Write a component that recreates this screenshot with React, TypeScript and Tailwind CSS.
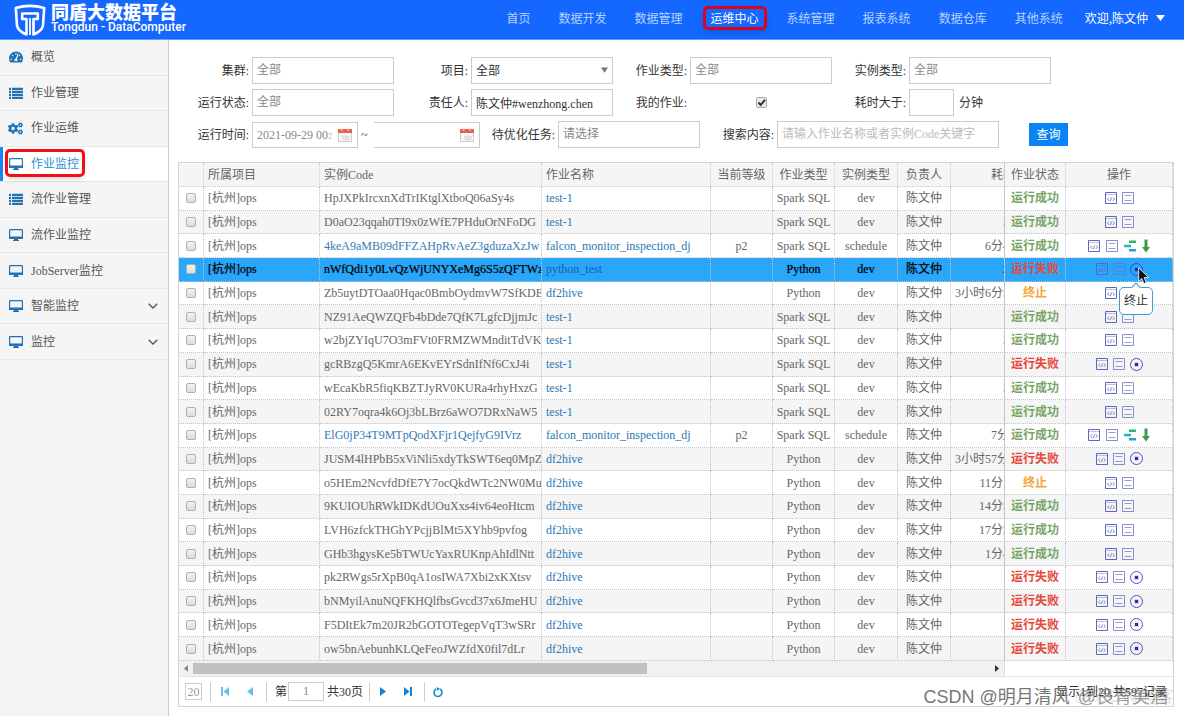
import type { ReactNode } from "react";
import { FaCogs, FaTachometerAlt } from "react-icons/fa";

const navItems = ["首页", "数据开发", "数据管理", "运维中心", "系统管理", "报表系统", "数据仓库", "其他系统"];

type MenuIcon = "dash" | "list" | "cogs" | "screen";

const menu: { label: string; icon: MenuIcon; active?: boolean; more?: boolean }[] = [
  { label: "概览", icon: "dash" },
  { label: "作业管理", icon: "list" },
  { label: "作业运维", icon: "cogs" },
  { label: "作业监控", icon: "screen", active: true },
  { label: "流作业管理", icon: "list" },
  { label: "流作业监控", icon: "screen" },
  { label: "JobServer监控", icon: "screen" },
  { label: "智能监控", icon: "screen", more: true },
  { label: "监控", icon: "screen", more: true },
];

type Status = "ok" | "fail" | "stop";

interface Job {
  code: string;
  name: string;
  type: string;
  time: string;
  status: Status;
  scheduled?: boolean;
  selected?: boolean;
}

const SQL = "Spark SQL";
const PY = "Python";

const jobs: Job[] = [
  { code: "HpJXPkIrcxnXdTrIKtglXtboQ06aSy4s", name: "test-1", type: SQL, time: "", status: "ok" },
  { code: "D0aO23qqah0TI9x0zWfE7PHduOrNFoDG", name: "test-1", type: SQL, time: "2", status: "ok" },
  { code: "4keA9aMB09dFFZAHpRvAeZ3gduzaXzJw", name: "falcon_monitor_inspection_dj", type: SQL, time: "6分4", status: "ok", scheduled: true },
  { code: "nWfQdi1y0LvQzWjUNYXeMg6S5zQFTWzB", name: "python_test", type: PY, time: "2", status: "fail", selected: true },
  { code: "Zb5uytDTOaa0Hqac0BmbOydmvW7SfKDE", name: "df2hive", type: PY, time: "3小时6分5", status: "stop" },
  { code: "NZ91AeQWZQFb4bDde7QfK7LgfcDjjmJc", name: "test-1", type: SQL, time: "", status: "ok" },
  { code: "w2bjZYIqU7O3mFVt0FRMZWMnditTdVK7", name: "test-1", type: SQL, time: "2", status: "ok" },
  { code: "gcRBzgQ5KmrA6EKvEYrSdnIfNf6CxJ4i", name: "test-1", type: SQL, time: "", status: "fail" },
  { code: "wEcaKbR5fiqKBZTJyRV0KURa4rhyHxzG", name: "test-1", type: SQL, time: "3", status: "ok" },
  { code: "02RY7oqra4k6Oj3bLBrz6aWO7DRxNaW5", name: "test-1", type: SQL, time: "", status: "ok" },
  { code: "ElG0jP34T9MTpQodXFjr1QejfyG9IVrz", name: "falcon_monitor_inspection_dj", type: SQL, time: "7分", status: "ok", scheduled: true },
  { code: "JUSM4lHPbB5xViNli5xdyTkSWT6eq0MpZ", name: "df2hive", type: PY, time: "3小时57分", status: "fail" },
  { code: "o5HEm2NcvfdDfE7Y7ocQkdWTc2NW0Mu2", name: "df2hive", type: PY, time: "11分1", status: "stop" },
  { code: "9KUIOUhRWkIDKdUOuXxs4iv64eoHtcm", name: "df2hive", type: PY, time: "14分5", status: "ok" },
  { code: "LVH6zfckTHGhYPcjjBlMt5XYhb9pvfog", name: "df2hive", type: PY, time: "17分2", status: "ok" },
  { code: "GHb3hgysKe5bTWUcYaxRUKnpAhIdlNtt", name: "df2hive", type: PY, time: "1分4", status: "ok" },
  { code: "pk2RWgs5rXpB0qA1osIWA7Xbi2xKXtsv", name: "df2hive", type: PY, time: "", status: "fail" },
  { code: "bNMyilAnuNQFKHQlfbsGvcd37x6JmeHU", name: "df2hive", type: PY, time: "", status: "fail" },
  { code: "F5DItEk7m20JR2bGOTOTegepVqT3wSRr", name: "df2hive", type: PY, time: "", status: "fail" },
  { code: "ow5bnAebunhKLQeFeoJWZfdX0fil7dLr", name: "df2hive", type: PY, time: "", status: "fail" },
];

const statusText: Record<Status, string> = { ok: "运行成功", fail: "运行失败", stop: "终止" };
const statusColor: Record<Status, string> = {
  ok: "text-[#78a566]",
  fail: "text-[#e8473a]",
  stop: "text-[#f5a638]",
};

const fieldBase = "h-[27px] border border-[#ccc] bg-white px-1 text-xs text-[#333] outline-none placeholder:text-[#888]";

function Logo() {
  return (
    <svg viewBox="0 0 32 32" className="h-8 w-8" fill="none" stroke="#fff">
      <path d="M1.800 4Q16-.2 30.200 4L29 21.500Q28 27 19.500 30.500V15h4.300V9.500H8.200V15h4.300v15.500Q4 27 3 21.500Z" strokeWidth="2.600" strokeLinejoin="round" />
      <path d="M16 14v17" strokeWidth="1.800" />
    </svg>
  );
}

function MenuGlyph({ icon }: { icon: MenuIcon }) {
  if (icon === "dash") return <FaTachometerAlt className="h-[14px] w-[14px]" />;
  if (icon === "cogs") return <FaCogs className="h-[15px] w-[15px]" />;
  if (icon === "list") {
    return (
      <svg viewBox="0 0 14 12" className="h-3 w-[14px]" fill="currentColor">
        <path d="M0 .8h2v2.200H0zM3 .8h11v2.200H3zM0 3.800h2V6H0zM3 3.800h11V6H3zM0 6.800h2V9H0zM3 6.800h11V9H3zM0 9.800h2V12H0zM3 9.800h11V12H3z" />
      </svg>
    );
  }
  return (
    <svg viewBox="0 0 14 12" className="h-3 w-[14px]">
      <rect x=".6" y=".6" width="12.800" height="8.800" rx=".6" fill="none" stroke="currentColor" strokeWidth="1.200" />
      <path d="M0 7.500h14V10H9v1h1v1H4v-1h1v-1H0z" fill="currentColor" />
    </svg>
  );
}

function CalendarIcon() {
  return (
    <svg viewBox="0 0 14 14" className="h-[14px] w-[14px] shrink-0">
      <rect x=".5" y="2.500" width="13" height="11" fill="#f8f8f8" stroke="#ccc" />
      <path d="M0 1h14v4H0z" fill="#ea6153" />
      <path d="M3 0h1.500v2.500H3zM9.500 0H11v2.500H9.500z" fill="#f6d5d1" />
      <path d="M4 8h1v4M7 8h2v4H7zM11 8v4" fill="none" stroke="#c4c4c4" strokeWidth=".8" />
    </svg>
  );
}

function CodeIcon() {
  return (
    <svg viewBox="0 0 12 12" className="h-3 w-3" fill="none" stroke="#5b66bd">
      <path d="M.5.5h11v11H.5z" />
      <path d="M.5 2.500h11" strokeOpacity=".4" />
      <path d="M4.200 5.500 2.500 7.200l1.700 1.700M7.800 5.500l1.700 1.700-1.700 1.700M6.800 5.500 5.200 9" strokeWidth=".8" />
    </svg>
  );
}

function LogIcon() {
  return (
    <svg viewBox="0 0 12 12" className="h-3 w-3" fill="none" stroke="#6a72c6">
      <path d="M.5.5h11v11H.5z" strokeOpacity=".8" />
      <path d="M2.500 3.500h7M2.500 8.500h7" strokeOpacity=".7" />
    </svg>
  );
}

function StopIcon() {
  return (
    <svg viewBox="0 0 13 13" className="h-[13px] w-[13px]">
      <circle cx="6.500" cy="6.500" r="6" fill="none" stroke="#3f3fb5" strokeWidth=".9" />
      <path d="M4.800 4.800h3.400v3.400H4.800z" fill="#2c2cb0" />
    </svg>
  );
}

function GanttIcon() {
  return (
    <svg viewBox="0 0 12 12" className="h-3 w-3">
      <path d="M5 .5h7v2.500H5z" fill="#2bb673" />
      <path d="M0 4.800h7v2.500H0z" fill="#1fb5b8" />
      <path d="M5 9h7v2.500H5z" fill="#2e9be0" />
    </svg>
  );
}

function DownIcon() {
  return (
    <svg viewBox="0 0 8 14" className="h-[14px] w-2">
      <path d="M2.500.5h3V8H8l-4 5.500L0 8h2.500z" fill="#3d9a4c" />
    </svg>
  );
}

function IconButton({ label, children }: { label: string; children: ReactNode }) {
  return (
    <button type="button" aria-label={label} className="block">
      {children}
    </button>
  );
}

function Actions({ job }: { job: Job }) {
  return (
    <div className={`flex items-center justify-center ${job.scheduled ? "gap-[6px]" : "gap-[5px]"}`}>
      <IconButton label="代码"><CodeIcon /></IconButton>
      <IconButton label="日志"><LogIcon /></IconButton>
      {job.scheduled && (
        <>
          <IconButton label="甘特图"><GanttIcon /></IconButton>
          <IconButton label="下游"><DownIcon /></IconButton>
        </>
      )}
      {job.status === "fail" && (
        <div className="relative">
          <IconButton label="停止"><StopIcon /></IconButton>
          {job.selected && (
            <>
              <div role="tooltip" className="absolute top-6 left-1/2 z-10 -translate-x-1/2 rounded-[5px] border border-[#3d9bd6] bg-white px-1 py-1 text-xs leading-[18px] whitespace-nowrap text-[#333]">
                <span className="absolute -top-1 left-1/2 h-[7px] w-[7px] -translate-x-1/2 rotate-45 border-t border-l border-[#3d9bd6] bg-white" />
                终止
              </div>
              <svg viewBox="0 0 12 18" className="absolute top-1 left-2 z-20 h-[18px] w-3">
                <path d="M.7.8v13.400l3.100-2.800 2.100 5.200 2.300-1-2.100-5h4.500z" fill="#111" stroke="#fff" strokeWidth=".8" />
              </svg>
            </>
          )}
        </div>
      )}
    </div>
  );
}

function Field({ label, id, children }: { label: string; id: string; children: ReactNode }) {
  return (
    <div className="flex w-[219px] items-center gap-[3px]">
      <label htmlFor={id} className="w-[71px] shrink-0 text-right">{label}</label>
      {children}
    </div>
  );
}

function DateField({ id, label, value }: { id: string; label: string; value: string }) {
  return (
    <div className={`flex h-[26px] w-[106px] items-center border-[#ccc] pr-[5px] pl-1 ${value ? "border" : "border border-l-0"}`}>
      <input id={id} aria-label={label} defaultValue={value} className="w-[75px] text-xs text-[#888] outline-none" />
      <span className="flex-1" />
      <CalendarIcon />
    </div>
  );
}

function Filters() {
  return (
    <form className="flex flex-col gap-[5px] text-[#333]">
      <div className="flex flex-wrap">
        <Field label="集群:" id="cluster">
          <input id="cluster" placeholder="全部" className={`${fieldBase} w-[142px]`} />
        </Field>
        <Field label="项目:" id="project">
          <div className="relative">
            <select id="project" className={`${fieldBase} w-[142px] appearance-none`}>
              <option>全部</option>
            </select>
            <svg viewBox="0 0 8 6" className="pointer-events-none absolute top-[10px] right-[5px] h-[6px] w-[7px]">
              <path d="M0 0h8L4 6z" fill="#777" />
            </svg>
          </div>
        </Field>
        <Field label="作业类型:" id="jobType">
          <input id="jobType" placeholder="全部" className={`${fieldBase} w-[142px]`} />
        </Field>
        <Field label="实例类型:" id="instType">
          <input id="instType" placeholder="全部" className={`${fieldBase} w-[142px]`} />
        </Field>
      </div>
      <div className="flex flex-wrap">
        <Field label="运行状态:" id="state">
          <input id="state" placeholder="全部" className={`${fieldBase} w-[142px]`} />
        </Field>
        <Field label="责任人:" id="owner">
          <input id="owner" defaultValue="陈文仲#wenzhong.chen" className={`${fieldBase} w-[142px]`} />
        </Field>
        <Field label="我的作业:" id="mine">
          <span className="relative flex w-[142px] justify-center">
            <input id="mine" type="checkbox" defaultChecked className="peer h-[11px] w-[11px] appearance-none rounded-[2px] border border-[#a8a8a8] bg-[#e9e9e9]" />
            <svg viewBox="0 0 11 11" className="pointer-events-none absolute hidden h-[11px] w-[11px] peer-checked:block">
              <path d="M2.500 5.500 4.700 8 9 2.800" fill="none" stroke="#333" strokeWidth="2" />
            </svg>
          </span>
        </Field>
        <Field label="耗时大于:" id="cost">
          <input id="cost" className={`${fieldBase} w-[45px]`} />
          <span className="ml-[2px]">分钟</span>
        </Field>
      </div>
      <div className="flex flex-wrap items-center">
        <label htmlFor="from" className="mr-[3px] w-[71px] text-right">运行时间:</label>
        <DateField id="from" label="开始时间" value="2021-09-29 00:00:00" />
        <span className="w-4 pl-[3px]">~</span>
        <DateField id="to" label="结束时间" value="" />
        <label htmlFor="optimize" className="mr-[3px] w-[75px] text-right">待优化任务:</label>
        <input id="optimize" placeholder="请选择" className={`${fieldBase} w-[142px]`} />
        <label htmlFor="search" className="mr-[3px] w-[74px] text-right">搜索内容:</label>
        <input id="search" placeholder="请输入作业名称或者实例Code关键字" className={`${fieldBase} w-[222px] placeholder:text-[#bbb]`} />
        <button type="submit" className="ml-[30px] h-[23px] w-[39px] bg-[#0a84f5] text-white">查询</button>
      </div>
    </form>
  );
}

const th = "h-6 border-r border-b border-dotted border-[#ccc] font-normal";
const td = "overflow-hidden border-r border-b border-dotted border-[#c4c4c4] whitespace-nowrap";

function rowStyle(job: Job) {
  if (job.selected) return "bg-[#2aa7fb] text-black [text-shadow:0_0_1px_#00000080]";
  return "text-[#666] odd:bg-white even:bg-[#f5f5f5]";
}

function JobTable() {
  return (
    <table className="h-[498px] w-full table-fixed border-separate border-spacing-0 leading-4">
      <colgroup>
        <col className="w-[25px]" />
        <col className="w-[116px]" />
        <col className="w-[222px]" />
        <col />
        <col className="w-[62px]" />
        <col className="w-[62px]" />
        <col className="w-[63px]" />
        <col className="w-[53px]" />
        <col className="w-[54px]" />
        <col className="w-[61px]" />
        <col className="w-[107px]" />
      </colgroup>
      <thead className="bg-[#f5f5f5] text-[#666]">
        <tr className="h-6">
          <th className={th} />
          <th className={`${th} pl-1 text-left`}>所属项目</th>
          <th className={`${th} pl-1 text-left`}>实例Code</th>
          <th className={`${th} pl-1 text-left`}>作业名称</th>
          <th className={th}>当前等级</th>
          <th className={th}>作业类型</th>
          <th className={th}>实例类型</th>
          <th className={th}>负责人</th>
          <th className={`${th} overflow-hidden pl-10 text-left whitespace-nowrap [border-right-style:solid]`}>耗时</th>
          <th className={th}>作业状态</th>
          <th className={th}>操作</th>
        </tr>
      </thead>
      <tbody>
        {jobs.map((job) => (
          <tr key={job.code} className={rowStyle(job)}>
            <td className={td}>
              <input
                type="checkbox"
                aria-label={job.code}
                className="mx-auto block h-[10px] w-[10px] appearance-none rounded-[2px] border border-[#b0b0b0] bg-linear-to-b from-[#f2f2f2] to-[#dcdcdc]"
              />
            </td>
            <td className={`${td} pl-1`}>[杭州]ops</td>
            <td className={`${td} pl-1`}>
              {job.scheduled ? <a href="#" className="text-[#337ab7]">{job.code}</a> : job.code}
            </td>
            <td className={`${td} pl-1`}>
              <a href="#" className={`[text-shadow:none] ${job.selected ? "text-[#1a62a5]" : "text-[#2a78b5]"}`}>{job.name}</a>
            </td>
            <td className={`${td} text-center`}>{job.scheduled ? "p2" : ""}</td>
            <td className={`${td} text-center`}>{job.type}</td>
            <td className={`${td} text-center`}>{job.scheduled ? "schedule" : "dev"}</td>
            <td className={`${td} text-center`}>陈文仲</td>
            <td className={`${td} [border-right-style:solid]`}>
              <div className="w-[58px] text-right">{job.time}</div>
            </td>
            <td className={`${td} text-center font-bold [text-shadow:none] ${statusColor[job.status]}`}>
              {statusText[job.status]}
            </td>
            <td className="border-r border-b border-dotted border-[#c4c4c4] [text-shadow:none]">
              <Actions job={job} />
            </td>
          </tr>
        ))}
      </tbody>
    </table>
  );
}

function Pager() {
  return (
    <div className="flex h-[30px] items-center border-t border-[#e2e2e2] pl-[6px] text-[#333]">
      <button type="button" className="h-[17px] w-[17px] border border-[#ccc] leading-none text-[#999]">20</button>
      <span className="ml-2 h-5 w-px bg-[#ccc]" />
      <button type="button" aria-label="首页" className="ml-[10px]">
        <svg viewBox="0 0 8 9" className="h-[9px] w-2" fill="#6ebcf0"><path d="M0 0h2v9H0zM8 0v9L2.500 4.500z" /></svg>
      </button>
      <button type="button" aria-label="上一页" className="ml-[18px]">
        <svg viewBox="0 0 6 9" className="h-[9px] w-[6px]" fill="#6ebcf0"><path d="M6 0v9L0 4.500z" /></svg>
      </button>
      <span className="ml-[13px] h-5 w-px bg-[#ccc]" />
      <label htmlFor="page" className="ml-2">第</label>
      <input id="page" defaultValue="1" className="ml-px h-[19px] w-9 border border-[#ccc] text-center text-[#888]" />
      <span className="ml-[3px]">共30页</span>
      <span className="ml-[6px] h-5 w-px bg-[#ccc]" />
      <button type="button" aria-label="下一页" className="ml-[10px]">
        <svg viewBox="0 0 6 9" className="h-[9px] w-[6px]" fill="#0a84e0"><path d="M0 0v9l6-4.500z" /></svg>
      </button>
      <button type="button" aria-label="末页" className="ml-[18px]">
        <svg viewBox="0 0 8 9" className="h-[9px] w-2" fill="#0a84e0"><path d="M6 0h2v9H6zM0 0v9l5.500-4.500z" /></svg>
      </button>
      <span className="ml-3 h-5 w-px bg-[#ccc]" />
      <button type="button" aria-label="刷新" className="ml-2">
        <svg viewBox="0 0 10 10" className="h-[10px] w-[10px]">
          <path d="M3.200 1.900A4 4 0 1 0 7 2" fill="none" stroke="#1b86cf" strokeWidth="1.600" />
          <path d="M3.800 0v4L7 1.800z" fill="#1b86cf" />
        </svg>
      </button>
      <span className="mr-[6px] ml-auto">显示1到20,共597记录</span>
    </div>
  );
}

export default function App() {
  return (
    <div className="relative flex min-h-screen flex-col bg-white font-['Liberation_Serif','Noto_Sans_CJK_SC',serif] text-xs">
      <header className="flex h-10 items-center border-b border-[#5aa0ff] bg-[#1467ff] pr-[19px] pl-[14px] font-['Noto_Sans_CJK_SC',sans-serif] text-white">
        <Logo />
        <div className="ml-[5px] pb-[3px]">
          <h1 className="text-lg leading-[18px] font-black">同盾大数据平台</h1>
          <p className="font-['Roboto',sans-serif] text-xs leading-[14px] font-medium">Tongdun - DataComputer</p>
        </div>
        <nav className="ml-auto flex gap-7 pb-[3px]">
          {navItems.map((item) => {
            const active = item === "运维中心";
            return (
              <a key={item} href="#" className={`relative ${active ? "text-white" : "text-[#b5d3ff]"}`}>
                {item}
                {active && <span className="absolute -inset-x-2 -inset-y-1 rounded-[5px] border-3 border-[#d8061c] shadow-md" />}
              </a>
            );
          })}
        </nav>
        <button type="button" className="ml-[22px] flex items-center gap-2 pb-[3px]">
          欢迎,陈文仲
          <svg viewBox="0 0 9 6" className="h-[6px] w-[9px]" fill="#fff"><path d="M0 0h9L4.500 6z" /></svg>
        </button>
      </header>

      <div className="flex flex-1">
        <aside className="w-[169px] shrink-0 border-r border-[#ccc] bg-[#f5f5f5]">
          <ul className="grid h-[320px] auto-rows-fr">
            {menu.map((item) => (
              <li key={item.label} className={`border-b border-[#e6e6e6] ${item.active ? "bg-white" : ""}`}>
                <a
                  href="#"
                  className={`relative flex h-full items-center border-l-3 pr-[10px] pl-[5px] ${item.active ? "border-[#1b86f5] text-[#2a8fd8]" : "border-transparent text-[#555]"}`}
                >
                  <span className="flex w-[15px] justify-center text-[#2272b4]"><MenuGlyph icon={item.icon} /></span>
                  <span className="ml-2">{item.label}</span>
                  {item.more && (
                    <svg viewBox="0 0 10 6" className="ml-auto h-[6px] w-[10px]" fill="none" stroke="#555" strokeWidth="1.300">
                      <path d="M.7.7 5 5 9.300.7" />
                    </svg>
                  )}
                  {item.active && <span className="absolute top-[2px] left-[2px] h-7 w-20 rounded-[5px] border-3 border-[#f20d18] shadow-md" />}
                </a>
              </li>
            ))}
          </ul>
        </aside>

        <main className="min-w-0 flex-1 pt-[17px] pr-[10px] pb-2 pl-[9px]">
          <Filters />
          <section className="mt-[14px] border border-[#d4d4d4]">
            <JobTable />
            <div className="flex">
              <div className="flex h-[15px] min-w-0 flex-1 items-center bg-[#f1f1f1] px-[5px]">
                <svg viewBox="0 0 4 7" className="h-[7px] w-1" fill="#888"><path d="M4 0v7L0 3.500z" /></svg>
                <div className="mx-[5px] flex-1"><div className="h-[11px] w-[57%] bg-[#c1c1c1]" /></div>
                <svg viewBox="0 0 4 7" className="h-[7px] w-1" fill="#333"><path d="M0 0v7l4-3.500z" /></svg>
              </div>
              <div className="w-[169px] border-l border-[#ddd]" />
            </div>
            <Pager />
          </section>
        </main>
      </div>

      <p className="pointer-events-none absolute right-4 bottom-1 flex gap-2 font-['Liberation_Sans','Noto_Sans_CJK_SC',sans-serif] text-lg leading-[30px] whitespace-nowrap text-[#777]">
        <span>CSDN @明月清风</span>
        <span className="text-[#777]/70">@良育美酒</span>
      </p>
      <p className="pointer-events-none absolute right-[10px] bottom-1 font-['Liberation_Sans','Noto_Sans_CJK_SC',sans-serif] text-base leading-[30px] whitespace-nowrap text-black/15">
        @51CTO博客
      </p>
    </div>
  );
}
